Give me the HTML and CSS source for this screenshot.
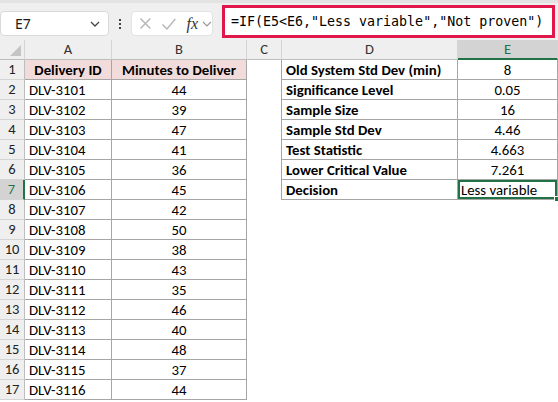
FILE: index.html
```html
<!DOCTYPE html>
<html lang="en">
<head>
    <meta charset="UTF-8">
    <title>Delivery Time Variability</title>
    <link rel="stylesheet" href="styles.css">
</head>
<body>
    <div class="toolbar">
        <div class="name-box">
            <span>E7</span>
            <svg class="chev" width="10" height="6" viewBox="0 0 10 6"><path d="M1 1 L5 5 L9 1" fill="none" stroke="#444" stroke-width="1.3"/></svg>
        </div>
        <div class="dots"><i></i><i></i><i></i></div>
        <div class="fx-box">
            <svg width="13" height="13" viewBox="0 0 13 13"><path d="M1.5 1.5 L11.5 11.5 M11.5 1.5 L1.5 11.5" stroke="#b5b5b5" stroke-width="1.4"/></svg>
            <svg width="16" height="14" viewBox="0 0 16 14"><path d="M1.5 7.5 L6 12 L14.5 2" fill="none" stroke="#b5b5b5" stroke-width="1.4"/></svg>
            <span class="fx">fx</span>
            <svg width="10" height="6" viewBox="0 0 10 6"><path d="M1 1 L5 5 L9 1" fill="none" stroke="#999" stroke-width="1.2"/></svg>
        </div>
        <div class="formula">=IF(E5&lt;E6,"Less variable","Not proven")</div>
    </div>

    <div class="sheet">
        <!-- column headers -->
        <div class="hd corner"><span class="tri"></span></div>
        <div class="hd">A</div>
        <div class="hd">B</div>
        <div class="hd">C</div>
        <div class="hd">D</div>
        <div class="hd sel-col">E</div>

        <div class="rh">1</div>
        <div class="c b title">Delivery ID</div>
        <div class="c b title ctr">Minutes to Deliver</div>
        <div class="c edge"></div>
        <div class="c b bold">Old System Std Dev (min)</div>
        <div class="c b ctr">8</div>

        <div class="rh">2</div>
        <div class="c b">DLV-3101</div>
        <div class="c b ctr">44</div>
        <div class="c edge"></div>
        <div class="c b bold">Significance Level</div>
        <div class="c b ctr">0.05</div>

        <div class="rh">3</div>
        <div class="c b">DLV-3102</div>
        <div class="c b ctr">39</div>
        <div class="c edge"></div>
        <div class="c b bold">Sample Size</div>
        <div class="c b ctr">16</div>

        <div class="rh">4</div>
        <div class="c b">DLV-3103</div>
        <div class="c b ctr">47</div>
        <div class="c edge"></div>
        <div class="c b bold">Sample Std Dev</div>
        <div class="c b ctr">4.46</div>

        <div class="rh">5</div>
        <div class="c b">DLV-3104</div>
        <div class="c b ctr">41</div>
        <div class="c edge"></div>
        <div class="c b bold">Test Statistic</div>
        <div class="c b ctr">4.663</div>

        <div class="rh">6</div>
        <div class="c b">DLV-3105</div>
        <div class="c b ctr">36</div>
        <div class="c edge"></div>
        <div class="c b bold">Lower Critical Value</div>
        <div class="c b ctr">7.261</div>

        <div class="rh sel-row">7</div>
        <div class="c b">DLV-3106</div>
        <div class="c b ctr">45</div>
        <div class="c edge"></div>
        <div class="c b bold">Decision</div>
        <div class="c b active">Less variable<span class="handle"></span></div>

        <div class="rh">8</div>
        <div class="c b">DLV-3107</div>
        <div class="c b ctr">42</div>
        <div class="c"></div><div class="c"></div><div class="c"></div>

        <div class="rh">9</div>
        <div class="c b">DLV-3108</div>
        <div class="c b ctr">50</div>
        <div class="c"></div><div class="c"></div><div class="c"></div>

        <div class="rh">10</div>
        <div class="c b">DLV-3109</div>
        <div class="c b ctr">38</div>
        <div class="c"></div><div class="c"></div><div class="c"></div>

        <div class="rh">11</div>
        <div class="c b">DLV-3110</div>
        <div class="c b ctr">43</div>
        <div class="c"></div><div class="c"></div><div class="c"></div>

        <div class="rh">12</div>
        <div class="c b">DLV-3111</div>
        <div class="c b ctr">35</div>
        <div class="c"></div><div class="c"></div><div class="c"></div>

        <div class="rh">13</div>
        <div class="c b">DLV-3112</div>
        <div class="c b ctr">46</div>
        <div class="c"></div><div class="c"></div><div class="c"></div>

        <div class="rh">14</div>
        <div class="c b">DLV-3113</div>
        <div class="c b ctr">40</div>
        <div class="c"></div><div class="c"></div><div class="c"></div>

        <div class="rh">15</div>
        <div class="c b">DLV-3114</div>
        <div class="c b ctr">48</div>
        <div class="c"></div><div class="c"></div><div class="c"></div>

        <div class="rh">16</div>
        <div class="c b">DLV-3115</div>
        <div class="c b ctr">37</div>
        <div class="c"></div><div class="c"></div><div class="c"></div>

        <div class="rh">17</div>
        <div class="c b">DLV-3116</div>
        <div class="c b ctr">44</div>
        <div class="c"></div><div class="c"></div><div class="c"></div>
    </div>
</body>
</html>
```

FILE: styles.css
```css
* {
    margin: 0;
    padding: 0;
    box-sizing: border-box;
}

body {
    width: 558px;
    height: 402px;
    overflow: hidden;
    background: #ffffff;
    font-family: Carlito, Lato, 'Liberation Sans', sans-serif;
    color: #000;
}

/* Formula bar */
.toolbar {
    height: 40px;
    background: #efefef;
    border-top: 3px solid #e3e3e3;
    display: flex;
    align-items: center;
    padding-right: 3px;
}

.name-box {
    width: 109px;
    height: 25px;
    background: #fff;
    border: 1px solid #d9d9d9;
    border-radius: 4px;
    display: flex;
    align-items: center;
    justify-content: space-between;
    padding: 0 8px 0 14px;
    font-family: 'Noto Sans', sans-serif;
    font-size: 14px;
    color: #1a1a1a;
    margin-top: 4px;
}

.dots {
    width: 22px;
    display: flex;
    flex-direction: column;
    align-items: center;
    gap: 2px;
    margin-top: 4px;
}

.dots i {
    width: 2px;
    height: 2px;
    background: #444;
}

.fx-box {
    width: 82px;
    height: 25px;
    background: #fff;
    border: 1px solid #e2e2e2;
    border-radius: 4px;
    display: flex;
    align-items: center;
    gap: 9px;
    padding-left: 7px;
    margin-top: 4px;
}

.fx {
    font-family: 'Liberation Serif', serif;
    font-style: italic;
    font-size: 16px;
    color: #333;
    margin-right: -5px;
    margin-left: 1px;
}

.formula {
    flex: 1;
    height: 33px;
    margin-left: 9px;
    margin-top: -1px;
    border: 3px solid #e0174a;
    background: #fff;
    font-family: 'DejaVu Sans Mono', 'Liberation Mono', monospace;
    font-size: 13.3px;
    line-height: 27px;
    padding-left: 6px;
    color: #000;
    white-space: nowrap;
}

/* Grid */
.sheet {
    display: grid;
    grid-template-columns: 25px 87px 135px 35px 176px 100px;
    grid-auto-rows: 20px;
    font-size: 14.8px;
}

.hd {
    background: #efefef;
    border-right: 1px solid #d4d4d4;
    border-bottom: 1px solid #bdbdbd;
    text-align: center;
    line-height: 19px;
    color: #333;
    font-size: 14.5px;
}

.corner {
    position: relative;
}

.tri {
    position: absolute;
    right: 3px;
    bottom: 3px;
    width: 0;
    height: 0;
    border-left: 11px solid transparent;
    border-bottom: 11px solid #c4c4c4;
}

.sel-col {
    background: #d3d3d3;
    border-bottom: 2px solid #217346;
    color: #217346;
}

.rh {
    background: #efefef;
    border-right: 1px solid #bdbdbd;
    border-bottom: 1px solid #d4d4d4;
    text-align: center;
    line-height: 19px;
    color: #222;
    font-size: 14.5px;
}

.sel-row {
    background: #d3d3d3;
    border-right: 2px solid #217346;
    color: #217346;
}

.c {
    line-height: 20px;
    padding: 0 4px;
    white-space: nowrap;
    overflow: hidden;
}

.b {
    border-right: 1px solid #a6a6a6;
    border-bottom: 1px solid #a6a6a6;
}

.edge {
    border-right: 1px solid #a6a6a6;
}

.title {
    background: #f2dcdb;
    font-weight: bold;
    text-align: center;
}

.bold {
    font-weight: bold;
}

.ctr {
    text-align: center;
}

.active {
    position: relative;
    overflow: visible;
    box-shadow: inset 0 0 0 2px #217346;
    padding-left: 3px;
}

.handle {
    position: absolute;
    right: -3px;
    bottom: -3px;
    width: 6px;
    height: 6px;
    background: #217346;
    border: 1px solid #fff;
}
```
